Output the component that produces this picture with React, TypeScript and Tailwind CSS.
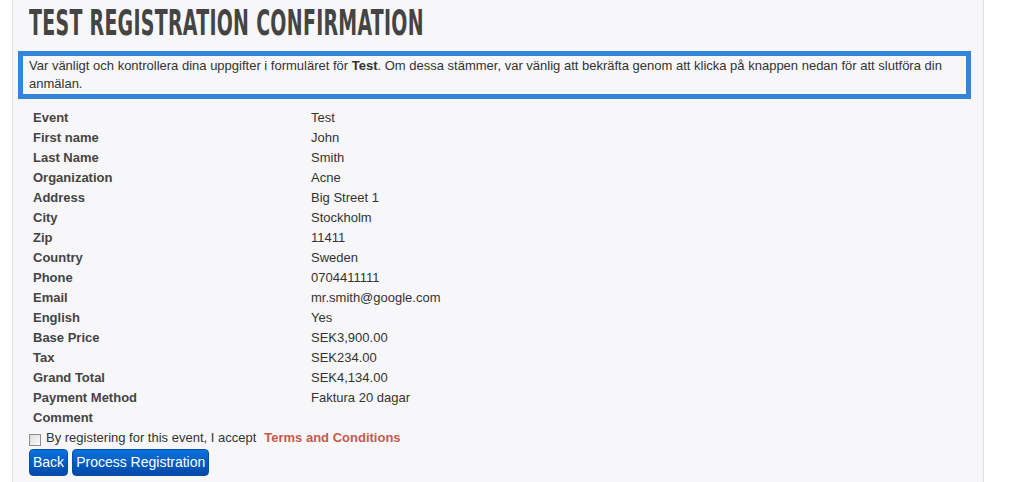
import React from "react";

const rows: [string, string][] = [
  ["Event", "Test"],
  ["First name", "John"],
  ["Last Name", "Smith"],
  ["Organization", "Acne"],
  ["Address", "Big Street 1"],
  ["City", "Stockholm"],
  ["Zip", "11411"],
  ["Country", "Sweden"],
  ["Phone", "0704411111"],
  ["Email", "mr.smith@google.com"],
  ["English", "Yes"],
  ["Base Price", "SEK3,900.00"],
  ["Tax", "SEK234.00"],
  ["Grand Total", "SEK4,134.00"],
  ["Payment Method", "Faktura 20 dagar"],
  ["Comment", ""],
];

export default function App() {
  return (
    <div className="flex min-h-screen bg-white font-['Liberation_Sans',Arial,sans-serif] text-[#333]">
      <div className="ml-[12px] flex w-[972px] flex-col border-x border-[#dedede] bg-[#f7f7f9] pl-[5px] pr-[12px]">
        <h1 className="ml-[11px] h-[46px] whitespace-nowrap pt-[3px] leading-[40px]">
          <span className="inline-block origin-left scale-x-[0.585] font-['DejaVu_Sans_Condensed','DejaVu_Sans',sans-serif] text-[36px] font-bold uppercase tracking-[0.5px] text-[#444] font-stretch-condensed">
            Test Registration Confirmation
          </span>
        </h1>

        <div className="mt-[5px] border-[5px] border-[#3484d9] px-[6px] py-[1px] text-[13px] leading-[18px]">
          Var vänligt och kontrollera dina uppgifter i formuläret för <b>Test</b>. Om dessa stämmer, var vänlig att bekräfta genom att klicka på knappen nedan för att slutföra din anmälan.
        </div>

        <div className="mt-[9px] ml-[15px] grid grid-cols-[278px_1fr] text-[13px] leading-[20px]">
          {rows.map(([label, value]) => (
            <React.Fragment key={label}>
              <div className="h-[20px] font-bold text-[#444]">{label}</div>
              <div className="h-[20px]">{value}</div>
            </React.Fragment>
          ))}
        </div>

        <label className="ml-[11px] flex h-[20px] items-center text-[13px]">
          <input
            type="checkbox"
            className="mr-[5px] mt-[3px] h-[12px] w-[12px] appearance-none border border-[#8e8f8f] bg-gradient-to-br from-[#dcdcdc] to-[#fbfbfb]"
          />
          <span>By registering for this event, I accept</span>
          <a className="ml-[8px] cursor-pointer font-bold text-[#c8594a]">Terms and Conditions</a>
        </label>

        <div className="ml-[11px] mt-[1px] flex gap-[4px]">
          <button className="h-[27px] rounded-[4px] border border-[#0450a8] bg-gradient-to-b from-[#0a72dc] to-[#0049a8] px-[3px] text-[14px] text-white">
            Back
          </button>
          <button className="h-[27px] rounded-[4px] border border-[#0450a8] bg-gradient-to-b from-[#0a72dc] to-[#0049a8] px-[3px] text-[14px] text-white">
            Process Registration
          </button>
        </div>
      </div>
    </div>
  );
}
